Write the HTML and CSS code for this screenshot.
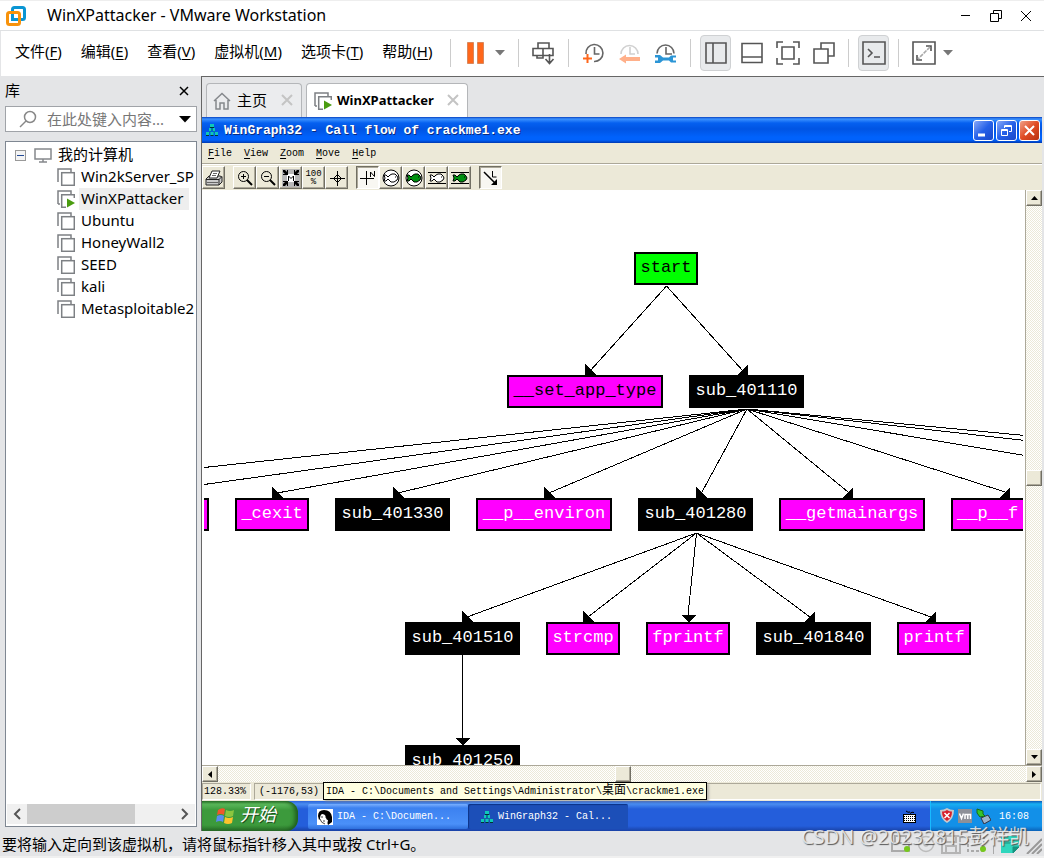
FILE: index.html
```html
<!DOCTYPE html>
<html lang="zh-CN">
<head>
<meta charset="utf-8">
<title>WinXPattacker - VMware Workstation</title>
<link rel="stylesheet" href="styles.css">
</head>
<body>
<svg width="0" height="0" class="defs" aria-hidden="true">
  <symbol id="vm" viewBox="0 0 18 18"><path d="M1 14V1h13v3" fill="none" stroke="#7d8084" stroke-width="1.5"/><rect x="4.7" y="4.7" width="12.6" height="12.6" fill="#fff" stroke="#7d8084" stroke-width="1.5"/></symbol>
  <symbol id="vm-on" viewBox="0 0 18 18"><path d="M1 14V1h13v3M3 14H1" fill="none" stroke="#7d8084" stroke-width="1.5"/><path d="M9 17.2H4.7V4.7h12.6V8" fill="#fff" stroke="#7d8084" stroke-width="1.5"/><path d="M10 8.500l8 4.500-8 4.500z" fill="#4a9c10"/></symbol>
  <symbol id="graph" viewBox="0 0 12 12"><path d="M6 3v3M3 9l3-4 3 4" stroke="#088" fill="none"/><path d="M4 0h4v3H4zM3 4h2v3H3zM7 4h2v3H7zM0 8h3v3H0zM4.500 8h3v3h-3zM9 8h3v3H9z" fill="#0fc8b8"/><path d="M0 11.500h3M4.500 11.500h3M9 11.500h3M4 3.500h4" stroke="#033"/></symbol>
  <symbol id="fish" viewBox="0 0 16 10"><path d="M1 2h2l2 2 2-2 2-1h3l2 2 1 2-1 2-3 2H8L5 6 3 8H1l1-3z" stroke="#000"/><path d="M12 4h1" stroke="#000"/></symbol>
</svg>

<header class="titlebar">
  <svg class="logo" viewBox="0 0 20 20" width="20" height="20"><rect x="6.500" y="1.500" width="12" height="12" rx="2" fill="none" stroke="#0a95d3" stroke-width="3"/><rect x="1.500" y="6.500" width="12" height="12" rx="2" fill="none" stroke="#f7920b" stroke-width="3"/><path d="M6.500 8v5.500H10" fill="none" stroke="#0a95d3" stroke-width="3"/></svg>
  <h1>WinXPattacker - VMware Workstation</h1>
  <div class="wincontrols">
    <button aria-label="最小化"><svg width="12" height="12"><path d="M1 5.500h9" stroke="#000"/></svg></button>
    <button aria-label="还原"><svg width="12" height="12"><path d="M.5 3.500h8v8h-8zM3.500 3V.5h8v8H9" fill="none" stroke="#000"/></svg></button>
    <button aria-label="关闭"><svg width="12" height="12"><path d="M1 1l10 10M11 1L1 11" stroke="#000"/></svg></button>
  </div>
</header>

<div class="menubar">
  <nav class="menu">
    <button>文件(<u>F</u>)</button><button>编辑(<u>E</u>)</button><button>查看(<u>V</u>)</button><button>虚拟机(<u>M</u>)</button><button>选项卡(<u>T</u>)</button><button>帮助(<u>H</u>)</button>
  </nav>
  <div class="group g-power">
    <button aria-label="挂起"><svg width="17" height="22"><path d="M.5.5h6v21h-6zM10.500.5h6v21h-6z" fill="#ff671b" stroke="#d9875c"/></svg></button>
    <button aria-label="电源菜单"><svg width="10" height="6"><path d="M0 0h10L5 5.500z" fill="#777"/></svg></button>
  </div>
  <div class="group g-send">
    <button aria-label="发送"><svg width="23" height="24" fill="none" stroke="#555" stroke-width="1.600"><path d="M6 7V2h11v5M1 7.500h20v7H1zM11 8v6M11 14v3H5v-3M17.500 13v9M13.500 18l4 4.500 4-4.500"/></svg></button>
  </div>
  <div class="group g-snap">
    <button aria-label="拍摄快照"><svg width="22" height="24" fill="none" stroke="#666" stroke-width="1.600"><path d="M3 13a8.500 8.500 0 1 1 8 7.500"/><path d="M11.500 6v7h5"/><path d="M0 17.500h9M4.500 13v9" stroke="#ff671b" stroke-width="2"/></svg></button>
    <button aria-label="恢复快照"><svg width="22" height="24" fill="none" stroke="#d0d0d0" stroke-width="1.600"><path d="M2 13a8.500 8.500 0 1 1 17 0"/><path d="M11 6v7h5"/><path d="M21 16v4H7v2.500L0 18l7-4.500V16z" fill="#ffb08a" stroke="none"/></svg></button>
    <button aria-label="管理快照"><svg width="22" height="24" fill="none" stroke="#666" stroke-width="1.600"><path d="M2 12.500a8.500 8.500 0 1 1 17 0"/><path d="M11 6v7h6"/><path d="M0 14h5l3 2.500h6l2-2h5v2h-3v3h3v2h-5l-2-2H8L5 22H0v-2.500h3v-3H0z" fill="#2b95d6" stroke="none"/></svg></button>
  </div>
  <div class="group g-view">
    <button class="tool on" aria-label="显示库"><svg width="22" height="22" fill="none" stroke="#555" stroke-width="1.600"><path d="M1 1h20v20H1zM8 1v20"/></svg></button>
    <button class="tool" aria-label="缩略图栏"><svg width="22" height="22" fill="none" stroke="#555" stroke-width="1.600"><path d="M1 1.500h20v19H1zM1 15h20"/></svg></button>
    <button class="tool" aria-label="全屏"><svg width="24" height="24" fill="none" stroke="#555" stroke-width="1.600"><path d="M1 7V1h6M17 1h6v6M23 17v6h-6M7 23H1v-6M6 6h12v12H6z"/></svg></button>
    <button class="tool" aria-label="Unity"><svg width="22" height="22" fill="none" stroke="#555" stroke-width="1.600"><path d="M8 7V1h13v13h-6M1 7h14v14H1z"/></svg></button>
  </div>
  <div class="group g-console">
    <button class="tool on" aria-label="控制台"><svg width="24" height="24" fill="none" stroke="#555" stroke-width="1.600"><path d="M1 1h22v22H1z"/><path d="M6 8l4 4-4 4M12 16h6"/></svg></button>
  </div>
  <div class="group g-stretch">
    <button aria-label="自由拉伸"><svg width="24" height="24" fill="none" stroke="#555" stroke-width="1.600"><path d="M1 1h22v22H1z"/><path d="M14 5h5v5M10 19H5v-5"/><path d="M18 6L6 18" stroke="#aaa" stroke-dasharray="4 1"/></svg></button>
    <button aria-label="拉伸菜单"><svg width="10" height="6"><path d="M0 0h10L5 5.500z" fill="#777"/></svg></button>
  </div>
</div>

<main class="work">
  <aside class="library">
    <div class="libhead"><h2>库</h2><button aria-label="关闭库"><svg width="10" height="10"><path d="M1 1l8 8M9 1L1 9" stroke="#000" stroke-width="1.500"/></svg></button></div>
    <div class="search">
      <svg width="18" height="18" fill="none" stroke="#888" stroke-width="1.500"><circle cx="11" cy="7" r="5.500"/><path d="M7 11l-6 6"/></svg>
      <input type="text" aria-label="搜索" placeholder="在此处键入内容...">
      <button aria-label="搜索选项"><svg width="12" height="7"><path d="M0 0h12L6 6.500z"/></svg></button>
    </div>
    <div class="tree">
      <div class="root">
        <svg width="11" height="11"><rect x=".5" y=".5" width="10" height="10" fill="#f4f4f4" stroke="#999"/><path d="M2 5.500h7" stroke="#234a96"/></svg>
        <svg width="18" height="15" fill="none" stroke="#85888c" stroke-width="1.500"><path d="M1 1h16v10H1zM9 11v3M5 14h8"/></svg>
        <span>我的计算机</span>
      </div>
      <ul>
        <li><svg width="18" height="18"><use href="#vm"/></svg><span>Win2kServer_SP</span></li>
        <li><svg width="18" height="18"><use href="#vm-on"/></svg><span class="sel">WinXPattacker</span></li>
        <li><svg width="18" height="18"><use href="#vm"/></svg><span>Ubuntu</span></li>
        <li><svg width="18" height="18"><use href="#vm"/></svg><span>HoneyWall2</span></li>
        <li><svg width="18" height="18"><use href="#vm"/></svg><span>SEED</span></li>
        <li><svg width="18" height="18"><use href="#vm"/></svg><span>kali</span></li>
        <li><svg width="18" height="18"><use href="#vm"/></svg><span>Metasploitable2</span></li>
      </ul>
      <div class="libscroll">
        <button aria-label="向左"><svg width="8" height="12"><path d="M7 1L2 6l5 5" fill="none" stroke="#555" stroke-width="2"/></svg></button>
        <div class="libthumb"></div>
        <button aria-label="向右"><svg width="8" height="12"><path d="M1 1l5 5-5 5" fill="none" stroke="#555" stroke-width="2"/></svg></button>
      </div>
    </div>
  </aside>

  <section class="console">
    <div class="tabs">
      <div class="tab">
        <svg width="18" height="18" fill="none" stroke="#85888c" stroke-width="1.500"><path d="M1 9l8-7.500L17 9M3 8v9h4v-6h4v6h4V8"/></svg>
        <button>主页</button>
        <button aria-label="关闭主页" class="tabx"><svg width="12" height="12"><path d="M1 1l10 10M11 1L1 11" stroke="#c4c4c4" stroke-width="2"/></svg></button>
      </div>
      <div class="tab active">
        <svg width="18" height="18"><use href="#vm-on"/></svg>
        <button>WinXPattacker</button>
        <button aria-label="关闭标签" class="tabx"><svg width="12" height="12"><path d="M1 1l10 10M11 1L1 11" stroke="#c4c4c4" stroke-width="2"/></svg></button>
      </div>
    </div>

    <div class="guest">
      <div class="xptitle">
        <svg width="12" height="12"><use href="#graph"/></svg>
        <h2>WinGraph32 - Call flow of crackme1.exe</h2>
        <div class="xpbtns">
          <button aria-label="最小化"><svg width="19" height="19"><path d="M4 14h7" stroke="#fff" stroke-width="3"/></svg></button>
          <button aria-label="还原"><svg width="19" height="19" fill="none" stroke="#fff"><path d="M4.500 8.500h6v6h-6zM4 9.500h7M7.500 7V4.500h7v6H12M7 5.500h8"/></svg></button>
          <button class="close" aria-label="关闭"><svg width="19" height="19"><path d="M5 5l9 9M14 5l-9 9" stroke="#fff" stroke-width="2"/></svg></button>
        </div>
      </div>
      <nav class="xpmenu"><button><u>F</u>ile</button><button><u>V</u>iew</button><button><u>Z</u>oom</button><button><u>M</u>ove</button><button><u>H</u>elp</button></nav>
      <div class="xptools">
        <div class="xpgroup">
          <button aria-label="Print"><svg width="18" height="16"><path d="M1 9l3-3h11l2 1v5l-3 3H1z" fill="#ccc" stroke="#222"/><path d="M4 8l3-7h8l-3 7z" fill="#fff" stroke="#222"/><path d="M1 9.500h13l3-3M14 9v6" stroke="#222" fill="none"/><path d="M2 12.500h11M8 3.500h4M7 5.500h4" stroke="#666"/></svg></button>
        </div>
        <div class="xpgroup">
          <button aria-label="Zoom in"><svg width="16" height="16" fill="none" stroke="#000"><circle cx="6.500" cy="6.500" r="5"/><path d="M4 6.500h5M6.500 4v5"/><path d="M10 10l5 5" stroke-width="2"/></svg></button>
          <button aria-label="Zoom out"><svg width="16" height="16" fill="none" stroke="#000"><circle cx="6.500" cy="6.500" r="5"/><path d="M4 6.500h5"/><path d="M10 10l5 5" stroke-width="2"/></svg></button>
          <button aria-label="Fit window"><svg width="18" height="18"><path d="M0 0h18v18H0z" fill="#b8b8b8"/><path d="M5 5h8v8H5z" fill="#fff"/><path d="M1 1h2l2 2V1l1 0v5H1V5h2L1 3zM17 1h-2l-2 2V1h-1v5h5V5h-2l2-2zM1 17h2l2-2v2h1v-5H1v1h2l-2 2zM17 17h-2l-2-2v2h-1v-5h5v1h-2l2 2z"/><path d="M6.500 12V7L9 9.500 11.500 7v5" fill="none" stroke="#000"/></svg></button>
          <button aria-label="100%" class="pct"><span>100</span><span>%</span></button>
          <button aria-label="Center"><svg width="16" height="16" fill="none" stroke="#000"><path d="M8.500 1v15M1 8.500h15M8.500 4.500l4 4-4 4-4-4z"/></svg></button>
        </div>
        <div class="xpgroup">
          <button class="down" aria-label="Nodes"><svg width="17" height="16" fill="none" stroke="#000"><path d="M7.500 1v14M1 8.500h14M11.500 7V2l4 4.500V1"/></svg></button>
          <button aria-label="Fish eye circle"><svg width="18" height="18"><circle cx="9" cy="9" r="8" fill="#fff" stroke="#000"/><use href="#fish" x="1" y="4" width="16" height="10" fill="#fff"/></svg></button>
          <button aria-label="Fish eye filled"><svg width="18" height="18"><circle cx="9" cy="9" r="8" fill="#fff" stroke="#000"/><use href="#fish" x="1" y="4" width="16" height="10" fill="#009010"/></svg></button>
          <button aria-label="Fish eye box"><svg width="18" height="18"><path d="M0 3.500h18M0 14.500h18" stroke="#000"/><use href="#fish" x="1" y="4" width="16" height="10" fill="#fff"/></svg></button>
          <button aria-label="Fish eye box filled"><svg width="18" height="18"><path d="M0 3.500h18M0 14.500h18" stroke="#000"/><use href="#fish" x="1" y="4" width="16" height="10" fill="#009010"/></svg></button>
        </div>
        <div class="xpgroup">
          <button class="down" aria-label="Layout"><svg width="16" height="16" fill="none" stroke="#000"><path d="M1 2l11 11" stroke-width="1.500"/><path d="M9.500 1v6h4"/><path d="M14 15V9l-6 6z" fill="#000" stroke="none"/></svg></button>
        </div>
      </div>

      <div class="view">
        <div class="canvas">
          <svg class="edges" width="819" height="575" shape-rendering="crispEdges">
            <g transform="translate(-204 -190)" fill="none" stroke="#000">
              <path d="M666.500 286L590 371M666.500 286L743 371"/>
              <path d="M747 409L204 467.500M747 409L204 484.500M747 409L277 493M747 409L398 493M747 409L549 493M747 409L702 492M747 409L848 492M747 409L1005 492M747 409L1025 435.500M747 409L1025 440.500M747 409L1025 455.500"/>
              <path d="M696.500 533L467 617M696.500 533L588 617M696.500 533L688 615M696.500 533L810 617M696.500 533L931 617M462.500 655V740"/>
            </g>
            <g transform="translate(-204 -190)">
              <path d="M585 364v11h11zM748 364v11h-11zM272 487v11h11zM393 487v11h11zM544 487v11h11zM696 487v11h11zM853 487v11h-11zM1010 487v11h-11zM462 611v11h11zM583 611v11h11zM681 615h15l-7 7zM815 611v11h-11zM936 611v11h-11zM455 738h15l-7 7z"/>
            </g>
          </svg>
          <div class="node start">start</div>
          <div class="node api dark settype">__set_app_type</div>
          <div class="node sub1110">sub_401110</div>
          <div class="node api edge-left"></div>
          <div class="node api cexit">_cexit</div>
          <div class="node sub1330">sub_401330</div>
          <div class="node api environ">__p__environ</div>
          <div class="node sub1280">sub_401280</div>
          <div class="node api mainargs">__getmainargs</div>
          <div class="node api pfmode">__p__f</div>
          <div class="node sub1510">sub_401510</div>
          <div class="node api strcmp">strcmp</div>
          <div class="node api fprintf">fprintf</div>
          <div class="node sub1840">sub_401840</div>
          <div class="node api printf">printf</div>
          <div class="node sub1250">sub_401250</div>
        </div>
        <div class="vscroll">
          <button aria-label="向上"><svg width="7" height="4"><path d="M0 4h7L3.500 0z"/></svg></button>
          <div class="thumb"></div>
          <button aria-label="向下"><svg width="7" height="4"><path d="M0 0h7L3.500 4z"/></svg></button>
        </div>
      </div>
      <div class="hscroll">
        <button aria-label="向左"><svg width="4" height="7"><path d="M4 0v7L0 3.500z"/></svg></button>
        <div class="thumb"></div>
        <button aria-label="向右"><svg width="4" height="7"><path d="M0 0v7l4-3.500z"/></svg></button>
      </div>
      <div class="xpstatus">
        <span class="cell zoomcell">128.33%</span><span class="cell poscell">(-1176,53)</span><span class="cell fill"></span>
        <div class="tooltip" role="tooltip">IDA - C:\Documents and Settings\Administrator\<span>桌面</span>\crackme1.exe</div>
      </div>
      <div class="taskbar">
        <button class="startbtn"><svg width="20" height="18"><path d="M2 3q4-3 7-1L8 8Q5 6 1 8z" fill="#f0562b"/><path d="M10 3q4 2 8 0l-1 6q-4 2-8 0z" fill="#8cc63f"/><path d="M1 9q4-2 7 0l-1 6q-3-2-7 0z" fill="#5a8df0"/><path d="M9 10q4 2 8 0l-1 6q-4 2-8 0z" fill="#fcc32c"/></svg><span>开始</span></button>
        <button class="task"><svg width="16" height="16"><path d="M0 0h16v16H0z" fill="#fff"/><path d="M1 7Q1 1 7 1q7 0 8 7v5l-4 3q-1-2 0-5-2 0-2-3-1-3-4-3-2 1-2 5l-1 1z" fill="#000"/><path d="M3 10q1 4 5 5M4 8h2M8 8h1M6 12h2" fill="none" stroke="#444"/></svg>IDA - C:\Documen...</button>
        <button class="task current"><svg width="12" height="12"><use href="#graph"/></svg>WinGraph32 - Cal...</button>
        <svg class="kbd" width="13" height="13"><path d="M7 3.500q2-2 4-1M3 1q2 2 4 1" fill="none" stroke="#000"/><path d="M0 4h13v9H0z" fill="#000"/><path d="M1 5h11v7H1z" fill="#fff"/><path d="M1 6.500h11M1 8.500h11M1 10.500h11" stroke="#000" stroke-dasharray="1 1"/></svg>
        <div class="tray">
          <svg width="14" height="16"><path d="M7 0q3 2 7 2 0 9-7 13Q0 11 0 2q4 0 7-2z" fill="#c8c8cc"/><path d="M7 2q3 2 5 1.500Q12 10 7 13 2 10 2 3.500 4 4 7 2z" fill="#d8202c"/><path d="M4.500 5l5 5M9.500 5l-5 5" stroke="#fff" stroke-width="1.500"/></svg>
          <svg width="14" height="14"><path d="M0 0h14v14H0z" fill="#8d9098"/><path d="M1.500 4.500l2 5 2-5M7 10V5.500h5.500V10M9.800 5.500V10" fill="none" stroke="#fff" stroke-width="1.500"/></svg>
          <svg width="15" height="16"><path d="M5 10l7-3 3 5-7 4z" fill="#9cb3ca" stroke="#334"/><path d="M1 1l6 2v3l2 2-5 1-3-4z" fill="#35c42b" stroke="#186b12"/></svg>
          <time>16:08</time>
        </div>
      </div>
    </div>
  </section>
</main>

<footer class="status">
  <span>要将输入定向到该虚拟机，请将鼠标指针移入其中或按 Ctrl+G。</span>
  <div class="devices">
    <svg width="20" height="19" fill="none" stroke="#aaa" stroke-width="2"><path d="M4 8V1h11v7M1 8h17v8H1z"/><circle cx="16" cy="14" r="3" fill="#76c81d" stroke="none"/></svg>
    <svg width="18" height="19" fill="none" stroke="#bbb" stroke-width="1.500"><circle cx="9" cy="9" r="7.500"/><circle cx="9" cy="9" r="2"/></svg>
    <svg width="20" height="19" fill="none" stroke="#b4b4b4" stroke-width="2"><path d="M1 1h18v17H1zM5 1v6h10V1M5 18v-7h10v7"/></svg>
    <svg width="20" height="19" fill="none" stroke="#aaa" stroke-width="2"><path d="M1 2h16v14H1z" stroke-dasharray="3 2"/><circle cx="16" cy="14" r="3" fill="#76c81d" stroke="none"/></svg>
    <i></i>
    <svg width="20" height="19"><path d="M1 1h18v11l-6 6H1z" fill="#2fd6bd"/><path d="M19 12h-6v6zM4 5h11M4 8h11" fill="#18917f" stroke="#18917f"/></svg>
    <svg width="16" height="16"><path d="M1 16L16 1M6 16L16 6M11 16l5-5" stroke="#999" stroke-width="2"/></svg>
  </div>
  <div class="watermark">CSDN @20232815彭祥凯</div>
</footer>
</body>
</html>
```
FILE: styles.css
```css
* { box-sizing: border-box; }
body {
  margin: 0;
  height: 100vh;
  display: flex;
  flex-direction: column;
  overflow: hidden;
  background: #e4e5e7;
  color: #000;
  font: 15px/20px "Noto Sans", "Noto Sans CJK SC", sans-serif;
}
.defs { position: absolute; }
svg { display: block; flex: none; }
button, input { font: inherit; color: inherit; background: none; border: 0; padding: 0; margin: 0; white-space: nowrap; }
button { display: flex; align-items: center; justify-content: center; flex: none; }
h1, h2, ul { margin: 0; padding: 0; font: inherit; }
u { text-underline-offset: 2px; }

.titlebar { display: flex; align-items: center; height: 31px; flex: none; padding: 0 12px 0 6px; background: #fff; border-top: 1px solid #eee; border-bottom: 1px solid #dfe1e3; }
.titlebar h1 { flex: 1; padding: 0 0 2px 21px; font-size: 16px; }
.wincontrols { display: flex; gap: 18px; }

.menubar { display: flex; align-items: center; height: 45px; flex: none; background: #fff; padding-bottom: 2px; border-left: 1px solid #e4e5e7; }
.menu { display: flex; gap: 19px; width: 449px; padding: 0 0 4px 14px; }
.menu button { display: block; }
.group { display: flex; align-items: center; height: 28px; border-left: 1px solid #ccc; }
.group .tool { width: 31px; height: 36px; border: 1px solid transparent; border-radius: 4px; }
.group .on { background: #e8eaec; border-color: #cfd1d3; }
.g-power { padding: 0 13px 0 16px; gap: 11px; }
.g-send { padding: 0 13px; }
.g-snap { padding: 0 13px 0 14px; gap: 14px; }
.g-view { padding: 0 9px; gap: 5px; }
.g-console { padding: 0 9px; }
.g-stretch { padding-left: 13px; gap: 7px; }

.work { flex: 1; min-height: 0; display: flex; }
.library { width: 201px; flex: none; display: flex; flex-direction: column; padding: 0 4px 4px 5px; }
.libhead { display: flex; justify-content: space-between; align-items: center; height: 30px; padding-right: 8px; }
.libhead h2 { padding-bottom: 2px; }
.search { display: flex; align-items: center; height: 26px; margin-bottom: 9px; padding: 0 5px 0 13px; background: #fff; border: 1px solid #a0a3a8; }
.search input { flex: 1; min-width: 0; padding-left: 10px; outline: 0; text-overflow: ellipsis; }
.search input::placeholder { color: #777; opacity: 1; }
.tree { flex: 1; min-height: 0; display: flex; flex-direction: column; background: #fff; border: 1px solid #7f8792; padding: 2px 1px; overflow: hidden; }
.root { display: flex; align-items: center; height: 22px; padding-left: 8px; gap: 8px; }
.root span { margin-left: -2px; padding-bottom: 2px; }
.tree ul { flex: 1; list-style: none; }
.tree li { display: flex; align-items: center; height: 22px; gap: 4px; padding-left: 50px; overflow: hidden; }
.tree li span { line-height: 20px; padding: 0 2px 2px; }
.tree .sel { background: #eee; padding-right: 6px; }
.libscroll { display: flex; height: 20px; background: #f0f0f0; }
.libscroll button { width: 20px; }
.libthumb { width: 108px; background: #cdcdcd; margin-right: auto; }

.console { flex: 1; min-width: 0; display: flex; flex-direction: column; border-top: 1px solid #666; border-left: 1px solid #666; }
.tabs { display: flex; gap: 4px; height: 40px; padding: 6px 4px 0; }
.tab { display: flex; align-items: center; width: 96px; gap: 6px; padding: 0 8px 0 6px; border: 1px solid #b4b6b9; border-bottom: 0; border-radius: 4px 4px 0 0; background: #ebecee; }
.tab button { padding-bottom: 2px; }
.tab .tabx { margin-left: auto; }
.tab.active { width: 162px; padding: 0 8px 0 7px; background: #fff; font-weight: bold; font-size: 13px; gap: 5px; }

.guest { flex: 1; min-height: 0; display: flex; flex-direction: column; margin-right: 2px; background: #ece9d8; font: 10px/12px "Liberation Mono", "Noto Sans CJK SC", monospace; }
.xptitle { display: flex; align-items: center; height: 26px; flex: none; padding: 0 2px 0 4px; color: #fff; background: linear-gradient(#0842c0, #3c92ff 2px, #0560f0 6px, #0054e3 12px, #0062fc 20px, #0062fc 23px, #0038b0); }
.xptitle h2 { flex: 1; padding: 2px 0 0 6px; font-size: 13px; font-weight: bold; line-height: 20px; text-shadow: 1px 1px #0a2a80; }
.xpbtns { display: flex; gap: 2px; }
.xpbtns button { width: 21px; height: 21px; border: 1px solid #fff; border-radius: 3px; background: linear-gradient(135deg, #88a8f8, #2560e8 50%, #1a48c8); }
.xpbtns .close { background: linear-gradient(135deg, #f0a088, #e04c24 50%, #b83010); }
.xpmenu { display: flex; gap: 12px; height: 20px; padding: 2px 6px 0; flex: none; }
.xptools { display: flex; gap: 8px; height: 27px; flex: none; padding: 2px 0; border-top: 1px solid #aca899; box-shadow: inset 0 1px #fff; }
.xpgroup { display: flex; }
.xpgroup button { width: 23px; height: 23px; border: 1px solid; border-color: #fff #716f64 #716f64 #fff; box-shadow: inset -1px -1px #aca899; }
.xpgroup .down { border-color: #716f64 #fff #fff #716f64; background: #f8f7f2; box-shadow: inset 1px 1px #aca899; }
.xpgroup .pct { flex-direction: column; font-size: 9px; line-height: 8px; }

.view { flex: 1; min-height: 0; display: flex; }
.canvas { position: relative; flex: 1; overflow: hidden; background: #fff; border-right: 2px solid #fff; border-left: 2px solid #fff; }
.edges { position: absolute; left: 0; top: 0; }
.node { position: absolute; height: 33px; width: 115px; border: 2px solid #000; background: #000; color: #fff; font-size: 17px; line-height: 27px; text-align: center; white-space: nowrap; }
.api { background: #f0f; }
.dark { color: #000; }
.start { left: 430px; top: 62px; width: 64px; background: #0f0; color: #000; }
.settype { left: 303px; top: 185px; width: 156px; }
.sub1110 { left: 485px; top: 185px; }
.edge-left, .cexit, .sub1330, .environ, .sub1280, .mainargs, .pfmode { top: 308px; }
.edge-left { left: -69px; width: 74px; }
.cexit { left: 31px; width: 74px; }
.sub1330 { left: 131px; }
.environ { left: 272px; width: 136px; }
.sub1280 { left: 434px; }
.mainargs { left: 575px; width: 146px; }
.pfmode { left: 747px; width: 126px; padding-left: 4px; text-align: left; }
.sub1510, .strcmp, .fprintf, .sub1840, .printf { top: 432px; }
.sub1510, .sub1250 { left: 201px; }
.strcmp { left: 342px; width: 74px; }
.fprintf { left: 442px; width: 84px; }
.sub1840 { left: 552px; }
.printf { left: 693px; width: 74px; }
.sub1250 { top: 555px; }

.vscroll, .hscroll { display: flex; flex: none; background: repeating-conic-gradient(#fff 0 25%, #ece9d8 0 50%) 0 0 / 2px 2px; }
.vscroll { flex-direction: column; width: 17px; border-left: 1px solid #aca899; }
.hscroll { height: 17px; border-top: 1px solid #aca899; }
.vscroll button, .hscroll button, .thumb { width: 16px; height: 16px; flex: none; background: #ece9d8; border: 1px solid; border-color: #fff #716f64 #716f64 #fff; box-shadow: inset -1px -1px #aca899; }
.vscroll .thumb { margin: 264px 0 auto; }
.hscroll .thumb { margin: 0 auto 0 397px; }

.xpstatus { position: relative; display: flex; flex: none; gap: 3px; height: 19px; padding: 1px 1px 1px 0; }
.cell { border: 1px solid; border-color: #aca899 #fff #fff #aca899; padding: 0 1px; line-height: 16px; }
.zoomcell { width: 49px; }
.poscell { width: 100px; padding-left: 4px; }
.fill { flex: 1; }
.tooltip { position: absolute; left: 121px; top: 0; width: 384px; height: 18px; padding-left: 2px; background: #ffffe1; border: 1px solid #000; box-shadow: 2px 2px 2px #8888; line-height: 16px; white-space: nowrap; }
.tooltip span { font-size: 12px; }

.taskbar { display: flex; align-items: center; flex: none; height: 30px; color: #fff; background: linear-gradient(#2a62d8, #4a8df0 3px, #245edb 8px, #245edb 25px, #1941a5); }
.startbtn { width: 96px; height: 30px; padding-right: 8px; gap: 4px; border-radius: 0 12px 12px 0; background: linear-gradient(#2f7d2f, #5cba5c 3px, #3c9a3c 9px, #3c9a3c 24px, #2a702a); box-shadow: inset -3px 0 4px #1e5c1e; }
.startbtn span { font-size: 18px; font-style: italic; line-height: 24px; text-shadow: 1px 1px #1c501c; }
.task { width: 160px; height: 25px; margin-left: 10px; padding: 2px 0 0 9px; gap: 4px; justify-content: flex-start; border-radius: 2px; background: linear-gradient(#7ab0ff, #3c81f0 4px, #4a90f8 20px, #2f70dd); }
.task.current { margin-left: 0; padding-left: 13px; gap: 5px; background: #1c4fb8; box-shadow: inset 1px 1px 1px #0e3488; }
.kbd { margin: 0 14px 0 auto; }
.tray { display: flex; align-items: center; gap: 4px; width: 112px; height: 30px; padding-left: 9px; border-left: 1px solid #18bbff; background: linear-gradient(#0c59b9, #18b0f2 3px, #1290e8 8px, #1290e8 25px, #0a62b8); }
.tray time { padding: 2px 0 0 4px; }

.status { position: relative; display: flex; align-items: center; justify-content: space-between; height: 27px; flex: none; padding: 0 2px; border-bottom: 2px solid #f0f0f0; white-space: nowrap; }
.devices { display: flex; align-items: end; gap: 6px; }
.devices i { width: 1px; height: 20px; background: #aaa; }
.watermark { position: absolute; right: 15px; top: -8px; font-size: 20px; line-height: 28px; color: #f4f4f4d0; text-shadow: 1px 1px 1px #555; font-family: "Open Sans", "Noto Sans CJK SC", sans-serif; }
```
